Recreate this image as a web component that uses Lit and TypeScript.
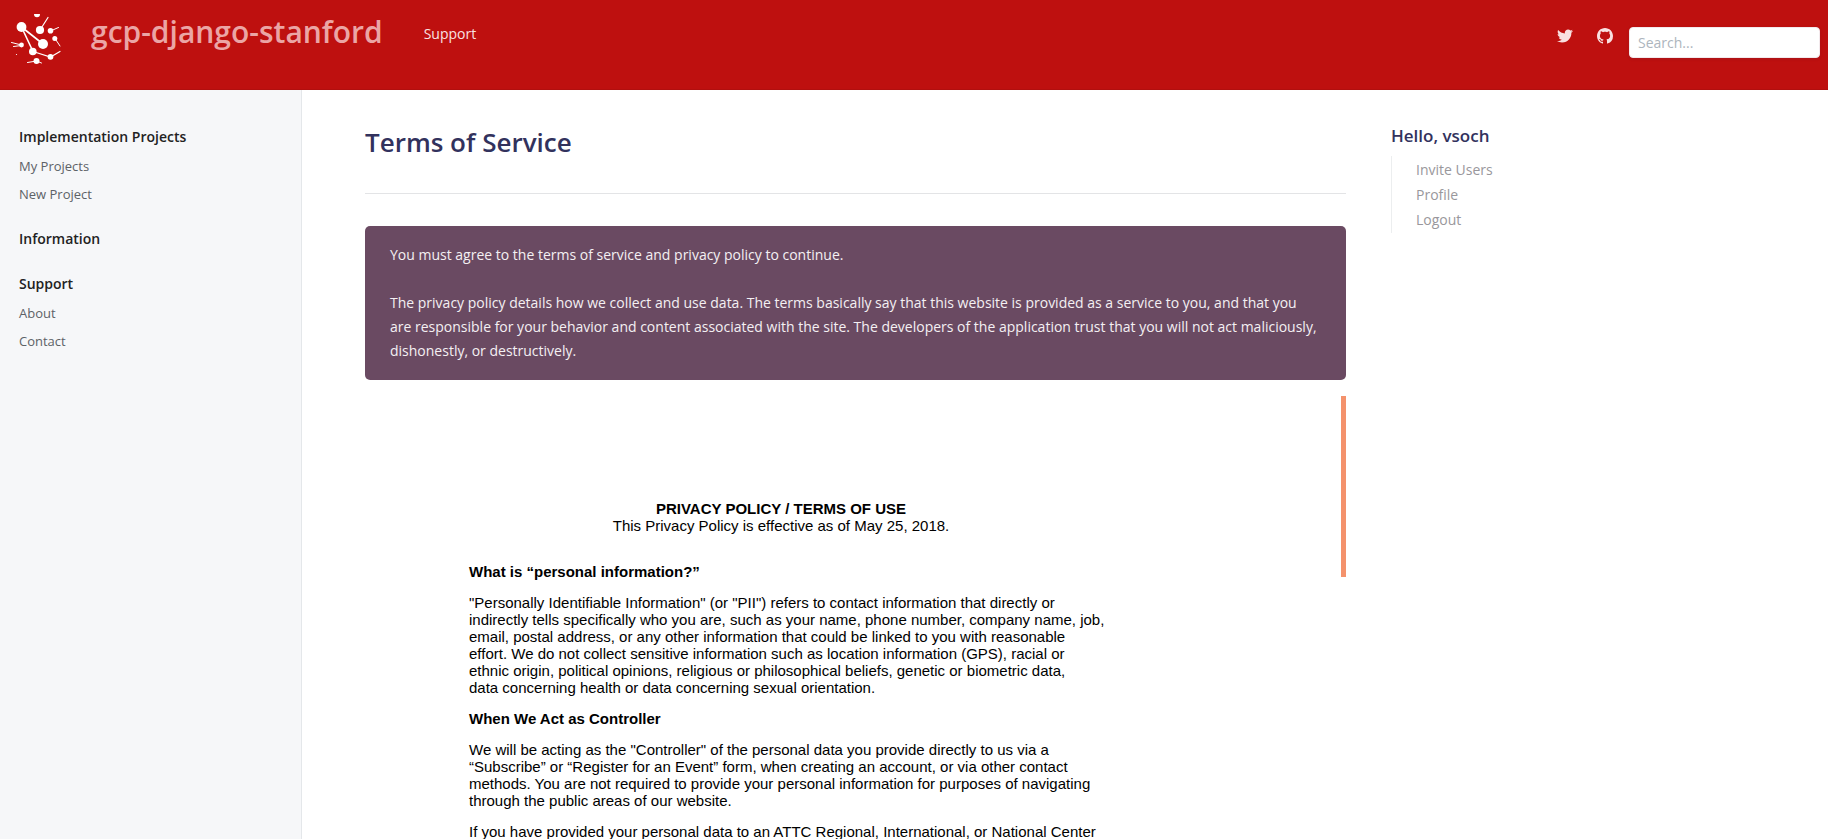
import { LitElement, html, css, svg } from "lit";
import { customElement } from "lit/decorators.js";

interface NavGroup {
  title: string;
  links: string[];
}

const navGroups: NavGroup[] = [
  { title: "Implementation Projects", links: ["My Projects", "New Project"] },
  { title: "Information", links: [] },
  { title: "Support", links: ["About", "Contact"] },
];

const accountLinks = ["Invite Users", "Profile", "Logout"];

const logo = svg`
  <g stroke="#fff" fill="none" stroke-linecap="round">
    <path stroke-width="1.6" d="M11.5 17 33 34 M11.5 17 23 41.5"/>
    <path stroke-width="1.2" d="M30 20 38 7.500 M23 41.500 40.500 47 50 41.500"/>
    <path stroke-width="1" d="M40.500 21 48.500 17.500 M45 28.500 50 36 M11.500 35 1.500 32.500 M11.500 35.500 3.500 36.500 M26.500 51 17.500 52.500 M26.500 51 31.500 53"/>
  </g>
  <g fill="#fff">
    <path d="M24 4h6a3 3.300 0 0 1-6 0z"/>
    <circle cx="11.500" cy="17" r="4.900"/>
    <circle cx="30" cy="20" r="4.100"/>
    <circle cx="33" cy="34" r="5"/>
    <circle cx="40.500" cy="20.800" r="2.800"/>
    <circle cx="44.800" cy="28.500" r="2.500"/>
    <circle cx="22.800" cy="41.500" r="3.800"/>
    <circle cx="40.500" cy="46.800" r="2.900"/>
    <circle cx="26.500" cy="51" r="3"/>
    <circle cx="11.500" cy="35" r="2.400"/>
    <circle cx="6.500" cy="44.500" r=".6"/>
  </g>`;

@customElement("app-root")
export class AppRoot extends LitElement {
  static styles = css`
    :host {
      display: flex;
      flex-direction: column;
      min-height: 100vh;
      background: #fff;
      font-family: "Open Sans", sans-serif;
      font-size: 14px;
      line-height: 24px;
      color: #333;
    }
    * {
      box-sizing: border-box;
    }
    h1, h2, p, ul {
      margin: 0;
      padding: 0;
    }
    ul {
      list-style: none;
    }
    a {
      color: inherit;
      text-decoration: none;
    }

    .header {
      display: flex;
      align-items: flex-start;
      height: 90px;
      padding: 10px 8px 0 10px;
      background: #be100f;
      border-bottom: 1px solid #b10f0e;
    }
    .logo {
      display: block;
      width: 54px;
      height: 56px;
    }
    .brand {
      margin-left: 27px;
      font-size: 30px;
      line-height: 44px;
      font-weight: 600;
      color: #eba5a5;
    }
    .primary {
      flex: 1;
      margin-left: 41px;
      padding-top: 12px;
      color: #f9e2e2;
    }
    .social {
      display: flex;
      gap: 24px;
      padding: 18px 16px 0 0;
      color: #f9e0e0;
    }
    .social svg {
      display: block;
      width: 16px;
      height: 16px;
    }
    .search {
      margin-top: 17px;
      width: 191px;
      height: 31px;
      padding: 0 8px;
      border: 1px solid #f3e9ec;
      border-radius: 4px;
      background: #fff;
      font: inherit;
      color: #333;
      box-shadow: 0 1px 3px rgba(50, 50, 93, 0.15);
    }
    .search::placeholder {
      color: #adb5bd;
      opacity: 1;
    }

    .body {
      flex: 1;
      display: grid;
      grid-template-columns: 302px minmax(0, 1fr) 482px;
    }
    .sidebar {
      display: flex;
      flex-direction: column;
      gap: 21px;
      padding: 35px 19px;
      background: #f6f7f9;
      border-right: 1px solid #e4e7ea;
      font-size: 13px;
    }
    .group-title {
      font-size: 14px;
      line-height: 24px;
      font-weight: 600;
      color: #222;
    }
    .group-links {
      display: grid;
      gap: 4px;
      padding-top: 5px;
      color: #5d6267;
    }

    .content {
      padding: 32px 0 0 63px;
    }
    .page-title {
      padding-bottom: 30px;
      border-bottom: 1px solid #e3e4e6;
      font-size: 26px;
      line-height: 41px;
      font-weight: 600;
      color: #32325d;
    }
    .notice {
      display: grid;
      gap: 24px;
      margin-top: 32px;
      padding: 17px 25px;
      border-radius: 5px;
      background: #6a4a62;
      color: #f4f0f3;
    }
    .document {
      display: flex;
      justify-content: space-between;
      margin-top: 16px;
    }
    .rail {
      flex: none;
      width: 5px;
      height: 181px;
      background: #f4926c;
    }
    .policy {
      display: flex;
      flex-direction: column;
      gap: 14px;
      width: 637px;
      margin-left: 104px;
      padding-top: 104px;
      font-family: "Liberation Sans", Arial, sans-serif;
      font-size: 15px;
      line-height: 17px;
      color: #000;
    }
    .policy h2 {
      font: inherit;
      font-weight: 700;
    }
    .policy-head {
      padding: 0 13px 15px 0;
      text-align: center;
    }

    .account {
      padding: 34px 24px 0 45px;
    }
    .account-title {
      font-size: 17px;
      line-height: 24px;
      font-weight: 600;
      color: #32325d;
    }
    .account-links {
      margin-top: 8px;
      padding: 1px 0 1px 24px;
      border-left: 1px solid #eceeef;
      line-height: 25px;
      color: #99979c;
    }
  `;

  render() {
    return html`
      <header class="header">
        <a href="#" aria-label="Home">
          <svg class="logo" viewBox="0 0 54 56" aria-hidden="true">${logo}</svg>
        </a>
        <a class="brand" href="#">gcp-django-stanford</a>
        <nav class="primary"><a href="#">Support</a></nav>
        <div class="social">
          <a href="#" aria-label="Twitter">
            <svg viewBox="0 0 512 512" fill="currentColor" aria-hidden="true">
              <path d="M459.370 151.716c.325 4.548.325 9.097.325 13.645 0 138.720-105.583 298.558-298.558 298.558-59.452 0-114.680-17.219-161.137-47.106 8.447.974 16.568 1.299 25.340 1.299 49.055 0 94.213-16.568 130.274-44.832-46.132-.975-84.792-31.188-98.112-72.772 6.498.974 12.995 1.624 19.818 1.624 9.421 0 18.843-1.300 27.614-3.573-48.081-9.747-84.143-51.980-84.143-102.985v-1.299c13.969 7.797 30.214 12.670 47.431 13.319-28.264-18.843-46.781-51.005-46.781-87.391 0-19.492 5.197-37.360 14.294-52.954 51.655 63.675 129.300 105.258 216.365 109.807-1.624-7.797-2.599-15.918-2.599-24.040 0-57.828 46.782-104.934 104.934-104.934 30.213 0 57.502 12.670 76.670 33.137 23.715-4.548 46.456-13.320 66.599-25.340-7.798 24.366-24.366 44.833-46.132 57.827 21.117-2.273 41.584-8.122 60.426-16.243-14.292 20.791-32.161 39.308-52.628 54.253z"/>
            </svg>
          </a>
          <a href="#" aria-label="GitHub">
            <svg viewBox="0 0 16 16" fill="currentColor" aria-hidden="true">
              <path d="M8 0C3.580 0 0 3.580 0 8c0 3.540 2.290 6.530 5.470 7.590.4.070.55-.17.55-.38 0-.19-.01-.82-.01-1.490-2.010.37-2.530-.49-2.690-.94-.09-.23-.48-.94-.82-1.130-.28-.15-.68-.52-.01-.53.63-.01 1.080.58 1.230.82.72 1.210 1.870.87 2.330.66.07-.52.28-.87.51-1.070-1.780-.2-3.640-.89-3.640-3.950 0-.87.31-1.590.82-2.150-.08-.2-.36-1.020.08-2.120 0 0 .67-.21 2.200.82.64-.18 1.320-.27 2-.27s1.360.09 2 .27c1.530-1.040 2.200-.82 2.200-.82.44 1.100.16 1.920.08 2.120.51.56.82 1.270.82 2.150 0 3.070-1.870 3.750-3.650 3.950.29.25.54.73.54 1.480 0 1.070-.01 1.930-.01 2.200 0 .21.15.46.55.38A8.010 8.010 0 0 0 16 8c0-4.420-3.580-8-8-8z"/>
            </svg>
          </a>
        </div>
        <input class="search" type="text" placeholder="Search..." aria-label="Search" />
      </header>

      <div class="body">
        <nav class="sidebar" aria-label="Sections">
          ${navGroups.map(
            (group) => html`
              <div>
                <h2 class="group-title">${group.title}</h2>
                ${group.links.length
                  ? html`<ul class="group-links">
                      ${group.links.map((link) => html`<li><a href="#">${link}</a></li>`)}
                    </ul>`
                  : null}
              </div>
            `
          )}
        </nav>

        <main class="content">
          <h1 class="page-title">Terms of Service</h1>
          <div class="notice">
            <p>You must agree to the terms of service and privacy policy to continue.</p>
            <p>
              The privacy policy details how we collect and use data. The terms basically say that this website is
              provided as a service to you, and that you are responsible for your behavior and content associated with
              the site. The developers of the application trust that you will not act maliciously, dishonestly, or
              destructively.
            </p>
          </div>
          <div class="document">
            <article class="policy">
              <div class="policy-head">
                <h2>PRIVACY POLICY / TERMS OF USE</h2>
                <p>This Privacy Policy is effective as of May 25, 2018.</p>
              </div>
              <h2>What is “personal information?”</h2>
              <p>
                "Personally Identifiable Information" (or "PII") refers to contact information that directly or
                indirectly tells specifically who you are, such as your name, phone number, company name, job,
                email, postal address, or any other information that could be linked to you with reasonable
                effort. We do not collect sensitive information such as location information (GPS), racial or
                ethnic origin, political opinions, religious or philosophical beliefs, genetic or biometric data,<br />
                data concerning health or data concerning sexual orientation.
              </p>
              <h2>When We Act as Controller</h2>
              <p>
                We will be acting as the "Controller" of the personal data you provide directly to us via a
                “Subscribe” or “Register for an Event” form, when creating an account, or via other contact
                methods. You are not required to provide your personal information for purposes of navigating
                through the public areas of our website.
              </p>
              <p>If you have provided your personal data to an ATTC Regional, International, or National Center</p>
            </article>
            <div class="rail"></div>
          </div>
        </main>

        <aside class="account">
          <h2 class="account-title">Hello, vsoch</h2>
          <ul class="account-links">
            ${accountLinks.map((link) => html`<li><a href="#">${link}</a></li>`)}
          </ul>
        </aside>
      </div>
    `;
  }
}
